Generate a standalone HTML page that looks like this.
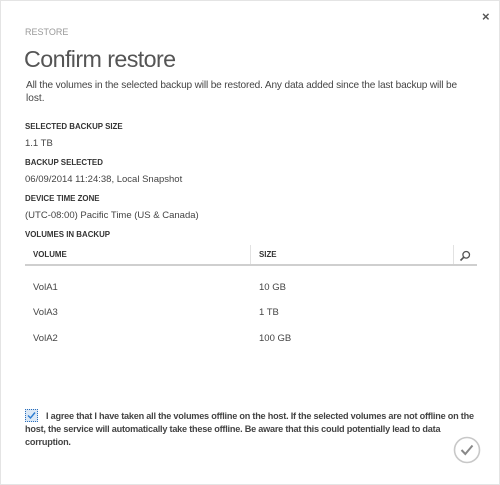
<!DOCTYPE html>
<html><head><meta charset="utf-8"><style>
body{margin:0;width:500px;height:485px;background:#fff;font-family:"Liberation Sans",sans-serif;color:#333;position:relative;overflow:hidden}
.frame{position:absolute;left:0;top:0;width:498px;height:483px;border:1px solid #e4e4e4}
.a{position:absolute;white-space:nowrap;line-height:1}
.lbl{font-size:7.9px;color:#333;font-weight:bold;letter-spacing:0}
.val{font-size:9.5px;color:#444}
</style></head><body>
<div class="frame"></div>
<div class="a" style="left:482px;top:10px;font-size:13px;font-weight:bold;color:#555">×</div>
<div class="a" style="left:25px;top:28px;font-size:9px;color:#999">RESTORE</div>
<div class="a" style="left:24px;top:48px;font-size:23.3px;color:#555;letter-spacing:-0.6px">Confirm restore</div>
<div class="a val" style="left:26px;top:81px;font-size:10.1px;letter-spacing:-0.15px">All the volumes in the selected backup will be restored. Any data added since the last backup will be</div>
<div class="a val" style="left:26px;top:94px;font-size:10.1px">lost.</div>
<div class="a lbl" style="left:25px;top:123px">SELECTED BACKUP SIZE</div>
<div class="a val" style="left:25px;top:139px">1.1 TB</div>
<div class="a lbl" style="left:25px;top:159px">BACKUP SELECTED</div>
<div class="a val" style="left:25px;top:175px">06/09/2014 11:24:38, Local Snapshot</div>
<div class="a lbl" style="left:25px;top:195px">DEVICE TIME ZONE</div>
<div class="a val" style="left:25px;top:211px">(UTC-08:00) Pacific Time (US &amp; Canada)</div>
<div class="a lbl" style="left:25px;top:231px">VOLUMES IN BACKUP</div>
<div class="a lbl" style="left:33px;top:251px">VOLUME</div>
<div class="a lbl" style="left:259px;top:251px">SIZE</div>
<div style="position:absolute;left:250px;top:245px;width:1px;height:20px;background:#e2e2e2"></div>
<div style="position:absolute;left:453px;top:245px;width:1px;height:20px;background:#e2e2e2"></div>
<svg style="position:absolute;left:459px;top:250px" width="12" height="12" viewBox="0 0 12 12"><circle cx="7.2" cy="4.8" r="3.3" fill="none" stroke="#555" stroke-width="1.3"/><path d="M4.8 7.2 L1.5 10.5" stroke="#555" stroke-width="1.6"/></svg>
<div style="position:absolute;left:25px;top:264px;width:452px;height:2px;background:#cfcfcf"></div>
<div class="a val" style="left:33px;top:283px">VolA1</div><div class="a val" style="left:259px;top:283px">10 GB</div>
<div class="a val" style="left:33px;top:308px">VolA3</div><div class="a val" style="left:259px;top:308px">1 TB</div>
<div class="a val" style="left:33px;top:334px">VolA2</div><div class="a val" style="left:259px;top:334px">100 GB</div>
<div style="position:absolute;left:25px;top:409px;width:11px;height:11px;border:1px dotted #2a6ebb;background:#dbe8f6"></div>
<svg style="position:absolute;left:26px;top:410px" width="11" height="11" viewBox="0 0 11 11"><path d="M2 5.5 L4.5 8 L9 2.5" fill="none" stroke="#2a7bd1" stroke-width="1.4"/></svg>
<div class="a" style="left:46px;top:412px;font-size:9.15px;font-weight:bold;color:#444;letter-spacing:-0.22px">I agree that I have taken all the volumes offline on the host. If the selected volumes are not offline on the</div>
<div class="a" style="left:25px;top:425px;font-size:9.15px;font-weight:bold;color:#444;letter-spacing:-0.22px">host, the service will automatically take these offline. Be aware that this could potentially lead to data</div>
<div class="a" style="left:25px;top:438px;font-size:9.15px;font-weight:bold;color:#444;letter-spacing:-0.22px">corruption.</div>
<svg style="position:absolute;left:453px;top:436px" width="28" height="28" viewBox="0 0 28 28"><circle cx="14" cy="14" r="12.5" fill="#fff" stroke="#c8c8c8" stroke-width="1.6"/><path d="M8.5 14 L12.3 18 L19.5 9.5" fill="none" stroke="#888" stroke-width="2"/></svg>
</body></html>
